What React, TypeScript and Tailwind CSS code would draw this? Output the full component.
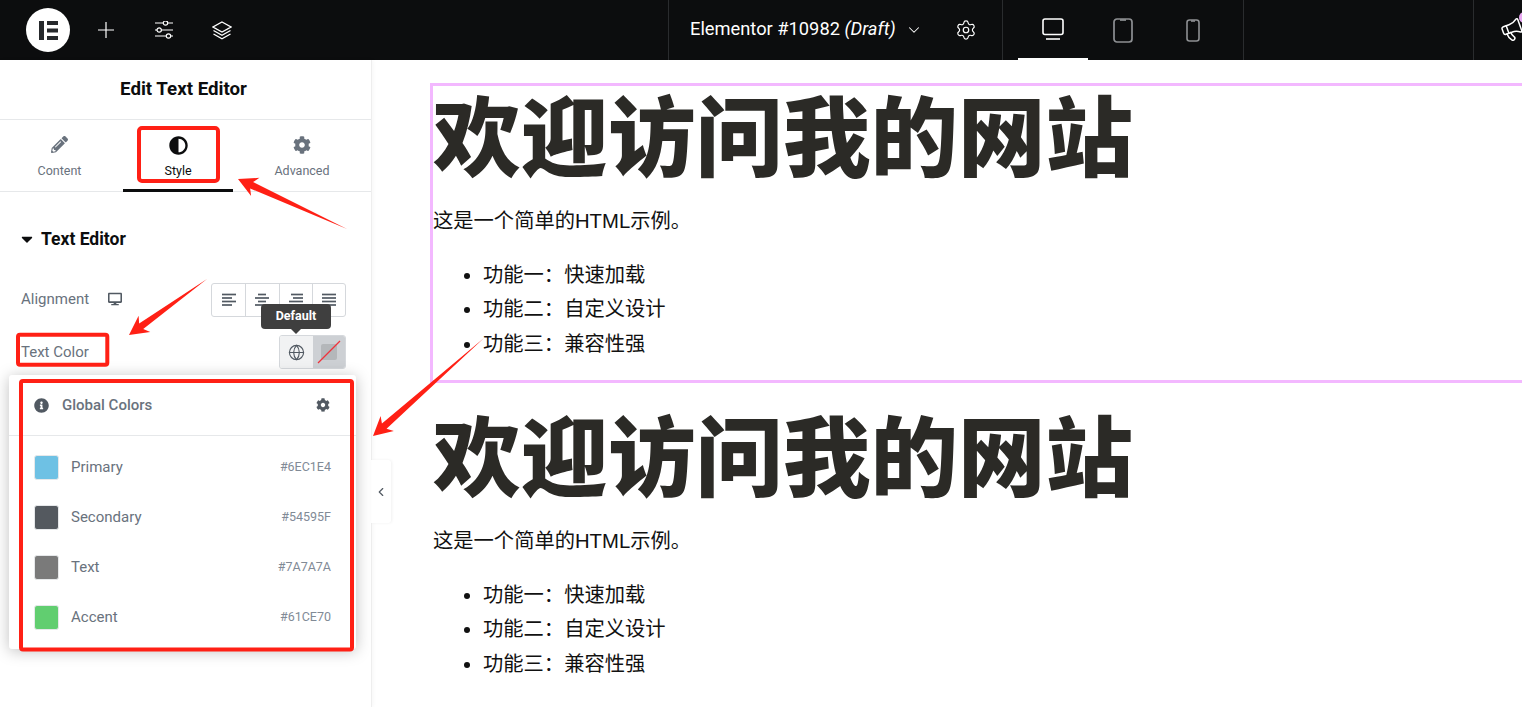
import { ChevronDown, ChevronLeft, Globe, Megaphone, Settings } from "lucide-react";
import { FaAdjust, FaCaretDown, FaCog, FaDesktop, FaInfoCircle, FaPencilAlt } from "react-icons/fa";

const colors = [
  { name: "Primary", hex: "#6EC1E4", swatch: "bg-[#6ec1e4]" },
  { name: "Secondary", hex: "#54595F", swatch: "bg-[#54595f]" },
  { name: "Text", hex: "#7A7A7A", swatch: "bg-[#7a7a7a]" },
  { name: "Accent", hex: "#61CE70", swatch: "bg-[#61ce70]" },
];

const features = ["功能一：快速加载", "功能二：自定义设计", "功能三：兼容性强"];

// line start/end for each stripe of the alignment icons
const alignIcons = [
  ["M0 1.5h14", "M0 5h10", "M0 8.5h14", "M0 12h10"],
  ["M3 1.5h8", "M0 5h14", "M3 8.5h8", "M0 12h14"],
  ["M2 1.5h12", "M4 5h10", "M0 8.5h14", "M4 12h10"],
  ["M0 1.5h14", "M0 5h14", "M0 8.5h14", "M0 12h14"],
];

// tapered annotation arrow, thin at the tail and wide at the head
function arrowPoints(x1: number, y1: number, x2: number, y2: number) {
  const len = Math.hypot(x2 - x1, y2 - y1);
  const ux = (x2 - x1) / len;
  const uy = (y2 - y1) / len;
  const at = (back: number, side: number) =>
    `${x2 - ux * back - uy * side},${y2 - uy * back + ux * side}`;
  return [`${x1},${y1}`, at(15, 3.5), at(19, 10), `${x2},${y2}`, at(19, -10), at(15, -3.5)].join(" ");
}

function Annotations() {
  return (
    <svg className="absolute inset-0 z-30 pointer-events-none" width="1522" height="707">
      <g fill="none" stroke="#ff2015" strokeWidth="4">
        <rect x="139" y="128" width="79" height="53" rx="3" />
        <rect x="18" y="334.7" width="89.3" height="30" rx="2" />
        <rect x="21" y="381" width="331" height="268.5" rx="2" />
      </g>
      <g fill="#ff2015">
        <polygon points={arrowPoints(347, 229, 238, 179)} />
        <polygon points={arrowPoints(207, 279, 129, 335)} />
        <polygon points={arrowPoints(484, 338, 373, 436)} />
      </g>
    </svg>
  );
}

function ElementorLogo() {
  return (
    <div className="w-11 h-11 rounded-full bg-white flex items-center justify-center shrink-0">
      <svg width="19" height="19" viewBox="0 0 19 19" fill="#26292c">
        <rect x="0" y="0" width="5" height="19" />
        <rect x="8" y="0" width="11" height="4" />
        <rect x="8" y="7.5" width="11" height="4" />
        <rect x="8" y="15" width="11" height="4" />
      </svg>
    </div>
  );
}

function TopBar() {
  return (
    <header className="h-[60px] bg-[#0c0d0e] flex text-white shrink-0">
      <div className="w-[668px] shrink-0 flex items-center pl-[26px]">
        <ElementorLogo />
        <svg className="ml-[28px]" width="16" height="16" viewBox="0 0 16 16" stroke="white" strokeWidth="1.2">
          <path d="M8 0v16M0 8h16" />
        </svg>
        <svg className="ml-[41px]" width="18" height="18" viewBox="0 0 18 18" fill="none" stroke="white" strokeWidth="1.2">
          <path d="M0 2h8M13 2h5M0 9h2M6.5 9h11.500M0 15h11M16 15h2" />
          <circle cx="10.500" cy="2" r="2.200" />
          <circle cx="4.200" cy="9" r="2.200" />
          <circle cx="13.500" cy="15" r="2.200" />
        </svg>
        <svg className="ml-[39px]" width="20" height="19" viewBox="0 0 20 19" fill="none" stroke="white" strokeWidth="1.3">
          <path d="M10 1L19 6L10 11L1 6Z" />
          <path d="M1.500 9.500L10 14.300L18.500 9.500" />
          <path d="M1.500 13L10 17.800L18.500 13" />
        </svg>
      </div>
      <div className="w-[334px] shrink-0 border-l border-[#2a2c2e] flex items-center pl-[21px]">
        <span className="text-[18.300px] whitespace-nowrap -translate-y-[1px]">
          Elementor #10982 <em>(Draft)</em>
        </span>
        <ChevronDown className="ml-[9px] w-[18px] h-[18px]" strokeWidth={1.4} />
        <Settings className="ml-[32px] w-[22px] h-[22px]" strokeWidth={1.3} />
      </div>
      <div className="w-[241px] shrink-0 border-l border-[#2a2c2e] flex items-center">
        <div className="w-[70px] h-full ml-[15px] flex items-center justify-center border-b-2 border-white">
          <svg width="22" height="23" viewBox="0 0 22 23" fill="none" stroke="white" strokeWidth="1.600">
            <rect x="1" y="1" width="20" height="15.500" rx="2" />
            <path d="M4 21h14" />
          </svg>
        </div>
        <svg className="ml-[25px]" width="20" height="25" viewBox="0 0 20 25" fill="none" stroke="#8e9093" strokeWidth="1.700">
          <rect x="1" y="1" width="18" height="23" rx="3" />
          <path d="M7 2h6" />
        </svg>
        <svg className="ml-[53px]" width="14" height="23" viewBox="0 0 14 23" fill="none" stroke="#8e9093" strokeWidth="1.600">
          <rect x="1" y="1" width="12" height="21" rx="2.500" />
          <path d="M5 2h4" />
        </svg>
      </div>
      <div className="flex-1 min-w-0 border-l border-[#2a2c2e] flex items-center">
        <div className="w-[229px] shrink-0" />
        <div className="h-full flex-1 border-l border-[#2a2c2e] pl-[26px] flex items-center relative overflow-hidden">
          <Megaphone className="w-[24px] h-[24px] shrink-0 -rotate-[20deg]" strokeWidth={1.5} />
          <span className="absolute left-[45px] top-[12px] w-[11px] h-[11px] rounded-full bg-[#e9a8f2]" />
        </div>
      </div>
    </header>
  );
}

function Tabs() {
  return (
    <div className="h-[72px] border-b border-[#e6e8ea] flex text-[12.500px]">
      <div className="w-[123px] pr-[4px] pt-[16px] flex flex-col items-center text-[#69727d]">
        <FaPencilAlt className="w-[17px] h-[17px]" />
        <span className="mt-[9px]">Content</span>
      </div>
      <div className="w-[110px] pt-[16px] flex flex-col items-center text-[#0c0d0e] border-b-[3px] border-[#0c0d0e] h-[72px]">
        <FaAdjust className="w-[19px] h-[19px]" />
        <span className="mt-[7px]">Style</span>
      </div>
      <div className="flex-1 pt-[16px] flex flex-col items-center text-[#69727d]">
        <FaCog className="w-[18px] h-[18px]" />
        <span className="mt-[8px]">Advanced</span>
      </div>
    </div>
  );
}

function GlobalColors() {
  return (
    <div className="absolute left-[9px] top-[315px] w-[347px] h-[274px] bg-white rounded-[3px] shadow-[0_2px_15px_rgba(0,0,0,0.25)] z-10">
      <div className="h-[61px] border-b border-[#e6e8ea] flex items-center px-[25px] text-[#515962]">
        <FaInfoCircle className="w-[15px] h-[15px]" />
        <span className="ml-[13px] text-[15px] font-medium text-[#69727d]">Global Colors</span>
        <FaCog className="ml-auto mr-[1px] w-[14px] h-[14px]" />
      </div>
      <div className="pt-[6px]">
        {colors.map((color) => (
          <div key={color.name} className="h-[50px] flex items-center px-[25px]">
            <span className={`w-[25px] h-[25px] rounded-[3px] border border-[#e6e8ea] ${color.swatch}`} />
            <span className="ml-[12px] text-[15px] text-[#69727d]">{color.name}</span>
            <span className="ml-auto text-[12.500px] text-[#818a96]">{color.hex}</span>
          </div>
        ))}
      </div>
    </div>
  );
}

function Sidebar() {
  return (
    <aside className="w-[372px] shrink-0 border-r border-[#eeeeee] bg-white relative shadow-[1px_0_4px_rgba(0,0,0,0.04)] z-10">
      <div className="h-[60px] border-b border-[#e6e8ea] pr-[4px] flex items-center justify-center">
        <h2 className="text-[18.700px] font-bold text-[#0c0d0e]">Edit Text Editor</h2>
      </div>
      <Tabs />
      <div className="px-[21px]">
        <div className="mt-[37px] h-[20px] flex items-center">
          <FaCaretDown className="-ml-[3px] w-[18px] h-[18px] text-[#0c0d0e]" />
          <span className="ml-[5px] text-[17.500px] font-bold text-[#0c0d0e]">Text Editor</span>
        </div>
        <div className="mt-[34px] h-[34px] flex items-center text-[#69727d] text-[15px]">
          <span className="-translate-y-[1px]">Alignment</span>
          <FaDesktop className="ml-[19px] w-[14px] h-[14px] text-[#515962] -translate-y-[1px]" />
          <div className="ml-auto mr-[4px] w-[135px] h-[34px] border border-[#d5d8dc] rounded-[3px] grid grid-cols-4">
            {alignIcons.map((lines, i) => (
              <div key={i} className="border-l first:border-l-0 border-[#d5d8dc] flex items-center justify-center">
                <svg width="14" height="14" viewBox="0 0 14 14" fill="none" stroke="#515962" strokeWidth="1.700">
                  {lines.map((d) => (
                    <path key={d} d={d} />
                  ))}
                </svg>
              </div>
            ))}
          </div>
        </div>
        <div className="mt-[18px] h-[34px] flex items-center text-[#69727d] text-[15px] relative">
          <span>Text Color</span>
          <div className="ml-auto mr-[4px] flex h-[34px] w-[67px] rounded-[3px] overflow-hidden border border-[#d5d8dc]">
            <div className="w-[33px] bg-[#f1f2f3] flex items-center justify-center">
              <Globe className="w-[17px] h-[17px] text-[#515962]" strokeWidth={1.600} />
            </div>
            <div className="flex-1 bg-[#cdd0d4] flex items-center justify-center relative">
              <span className="w-[16px] h-[16px] bg-[#b4b7ba] rounded-[2px]" />
              <svg className="absolute inset-0" width="33" height="32" viewBox="0 0 33 32">
                <path d="M5 27L27 5" stroke="#f0323c" strokeWidth="1.300" />
              </svg>
            </div>
          </div>
          <div className="absolute right-[19px] top-[-31px] w-[70px] h-[25px] bg-[#3f3f3f] rounded-[4px] flex items-center justify-center text-white text-[12.500px] font-bold">
            Default
            <span className="absolute left-1/2 -translate-x-1/2 top-[25px] w-0 h-0 border-x-[5px] border-x-transparent border-t-[5px] border-t-[#3f3f3f]" />
          </div>
        </div>
      </div>
      <GlobalColors />
      <div className="absolute left-[371px] top-[400px] w-[20px] h-[63px] bg-white rounded-r-[3px] shadow-[1px_0_3px_rgba(0,0,0,0.06)] flex items-center justify-center text-[#515962]">
        <ChevronLeft className="w-[14px] h-[14px]" strokeWidth={2} />
      </div>
    </aside>
  );
}

function PageBlock() {
  return (
    <>
      <h1 className="text-[87.500px] leading-[104px] pt-[3px] font-black text-[#2b2a26] mb-[12px] whitespace-nowrap">欢迎访问我的网站</h1>
      <p className="text-[20.300px] leading-[34.500px] text-[#111111] mb-[19px]">这是一个简单的HTML示例。</p>
      <ul className="list-disc pl-[50px] text-[20.300px] leading-[34.500px] text-[#111111]">
        {features.map((item) => (
          <li key={item}>{item}</li>
        ))}
      </ul>
    </>
  );
}

export default function App() {
  return (
    <div className="relative w-[1522px] h-[707px] overflow-hidden bg-white flex flex-col font-[Roboto,'Noto_Sans_CJK_SC',sans-serif]">
      <TopBar />
      <div className="flex flex-1 min-h-0">
        <Sidebar />
        <main className="flex-1 min-w-0 pt-[23px] pl-[58px] font-['Liberation_Sans','Noto_Sans_CJK_SC',sans-serif] overflow-hidden">
          <div className="border-[3px] border-[#f3b8ff] w-[1200px] h-[300px] -mb-[1px]">
            <div className="-mt-[1px]">
              <PageBlock />
            </div>
          </div>
          <div className="pl-[3px] pt-[23px]">
            <PageBlock />
          </div>
        </main>
      </div>
      <Annotations />
    </div>
  );
}
